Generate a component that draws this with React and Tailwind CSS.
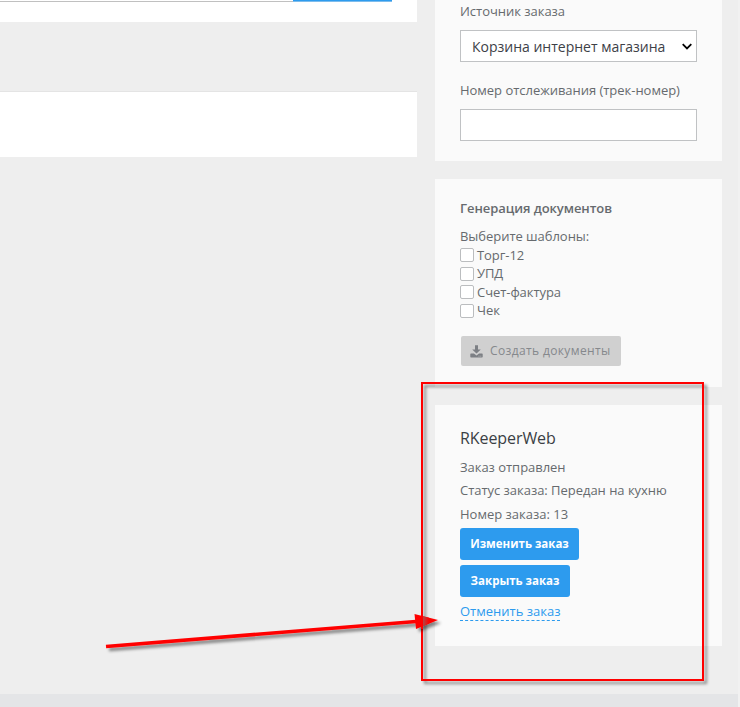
import React, { useState } from 'react';

const templates = ['Торг-12', 'УПД', 'Счет-фактура', 'Чек'];

const DownloadIcon = () => (
  <svg width="13" height="13" viewBox="0 0 13 13" fill="#7c7f84" className="shrink-0">
    <path d="M5 0.3h3v4.2h2.8L6.500 8.600 2.200 4.500H5z" />
    <path fillRule="evenodd" d="M1 8.500h2.900l2.600 2 2.600-2h2.900q0.700 0 0.700 0.700v2.600q0 0.700-0.700 0.700H1q-0.700 0-0.700-0.700V9.200q0-0.700 0.700-0.700zM8.600 10.800v0.800h0.800v-0.800zM10.400 10.800v0.800h0.800v-0.800z" />
  </svg>
);

const OrderSource = () => (
  <section className="h-[161px] bg-[#fafafa] px-[25px] pt-[2px]">
    <div className="h-7 leading-[18px] tracking-[-0.03px]">Источник заказа</div>
    <div className="flex h-8 items-center justify-between border border-[#c0c2c4] bg-white pl-[11px] pr-1 text-[14px] text-[#3d4147]">
      <span>Корзина интернет магазина</span>
      <svg width="10" height="7" viewBox="0 0 10 7" fill="none" stroke="#000" strokeWidth="1.8">
        <path d="M0.7 1.2 5 5.4 9.3 1.2" />
      </svg>
    </div>
    <div className="mt-[19px] h-7 leading-[19px] tracking-[-0.03px]">Номер отслеживания (трек-номер)</div>
    <input className="block h-8 w-full border border-[#c0c2c4] bg-white px-3 outline-none" />
  </section>
);

const Documents = () => {
  const [checked, setChecked] = useState([]);

  const toggle = (name) => {
    setChecked(checked.includes(name) ? checked.filter((n) => n !== name) : [...checked, name]);
  };

  return (
    <section className="h-[208px] bg-[#fafafa] px-[25px] pt-5">
      <h4 className="h-7 font-semibold leading-[19px] tracking-[-0.06px]">Генерация документов</h4>
      <div className="leading-[19px] tracking-[-0.04px]">Выберите шаблоны:</div>
      {templates.map((name) => (
        <label key={name} className="flex h-[18.5px] items-center gap-[3px] tracking-[-0.06px]">
          <input
            type="checkbox"
            checked={checked.includes(name)}
            onChange={() => toggle(name)}
            className="size-3.5 appearance-none rounded-xs border border-[#bbbdbf] bg-white checked:bg-[#2d9bee]"
          />
          {name}
        </label>
      ))}
      <button className="ml-px mt-4 flex h-[30px] w-40 items-center gap-[7px] rounded-xs bg-[#d0d0d0] pl-[9px] text-[12px] font-medium tracking-[0.37px] text-[#85888c]">
        <DownloadIcon />
        Создать документы
      </button>
    </section>
  );
};

const RKeeper = () => (
  <section className="h-[241px] bg-[#fafafa] px-[25px] pt-[21px]">
    <h3 className="h-[30px] text-[16px] leading-6 tracking-[-0.08px] text-[#3b3f45]">RKeeperWeb</h3>
    <p className="leading-[23px] tracking-[-0.03px]">Заказ отправлен</p>
    <p className="leading-[23px] tracking-[-0.03px]">Статус заказа: Передан на кухню</p>
    <p className="leading-[25px]">Номер заказа: 13</p>
    <div className="mt-px flex flex-col items-start gap-[5px] text-[11.5px] font-bold text-white">
      <button className="h-8 w-[119px] rounded-[3px] bg-[#2d9bee]">Изменить заказ</button>
      <button className="h-8 w-[110px] rounded-[3px] bg-[#2d9bee]">Закрыть заказ</button>
    </div>
    <a href="#cancel" className="mt-1.5 inline-block border-b border-dashed border-[#2d9bee] leading-[17px] text-[#2d9bee]">
      Отменить заказ
    </a>
  </section>
);

// red frame and arrow lying over the page
const Annotations = () => (
  <svg className="pointer-events-none absolute inset-0" width="740" height="707" viewBox="0 0 740 707">
    <defs>
      <filter id="shade" filterUnits="userSpaceOnUse" x="0" y="0" width="740" height="707">
        <feDropShadow dx="3" dy="3" stdDeviation="1.5" floodColor="#000" floodOpacity="0.45" />
      </filter>
      <linearGradient id="overlap">
        <stop offset="0" stopColor="#b04848" />
        <stop offset="1" stopColor="#f00" />
      </linearGradient>
    </defs>
    <rect x="422" y="383" width="281" height="297" fill="none" stroke="#f00" strokeWidth="2" filter="url(#shade)" />
    <g filter="url(#shade)">
      <path d="M106 646.5 416 621.5" stroke="#f00" strokeWidth="3.6" />
      <path d="M414.500 614 438 620 416 629z" fill="#f00" />
    </g>
    <path d="M423 616.200v10l6-2.600v-5.900z" fill="url(#overlap)" />
    <path d="M422 614v15" stroke="#f00" strokeWidth="2" />
  </svg>
);

const App = () => (
  <div className="relative flex h-[707px] w-[740px] flex-col overflow-hidden bg-[#f1f1f1] font-['Open_Sans','Noto_Sans',sans-serif] text-[13px] text-[#666a6e]">
    <div className="flex h-[694px] w-[738px] bg-[#eee]">
      <main className="w-[417px]">
        <div className="h-[22px] bg-white">
          <div className="flex h-0.5">
            <div className="w-[293px] border-b border-[#c0c0c0]" />
            <div className="w-[99px] border-b border-[#7dbcec] bg-[#2d9bee]" />
          </div>
        </div>
        <div className="mt-[69px] h-[66px] border-t border-[#e4e4e4] bg-white" />
      </main>
      <aside className="ml-[18px] flex w-[287px] flex-col gap-[18px]">
        <OrderSource />
        <Documents />
        <RKeeper />
      </aside>
    </div>
    <footer className="h-[13px] w-[738px] bg-[#e4e5e7]" />
    <Annotations />
  </div>
);

export default App;
